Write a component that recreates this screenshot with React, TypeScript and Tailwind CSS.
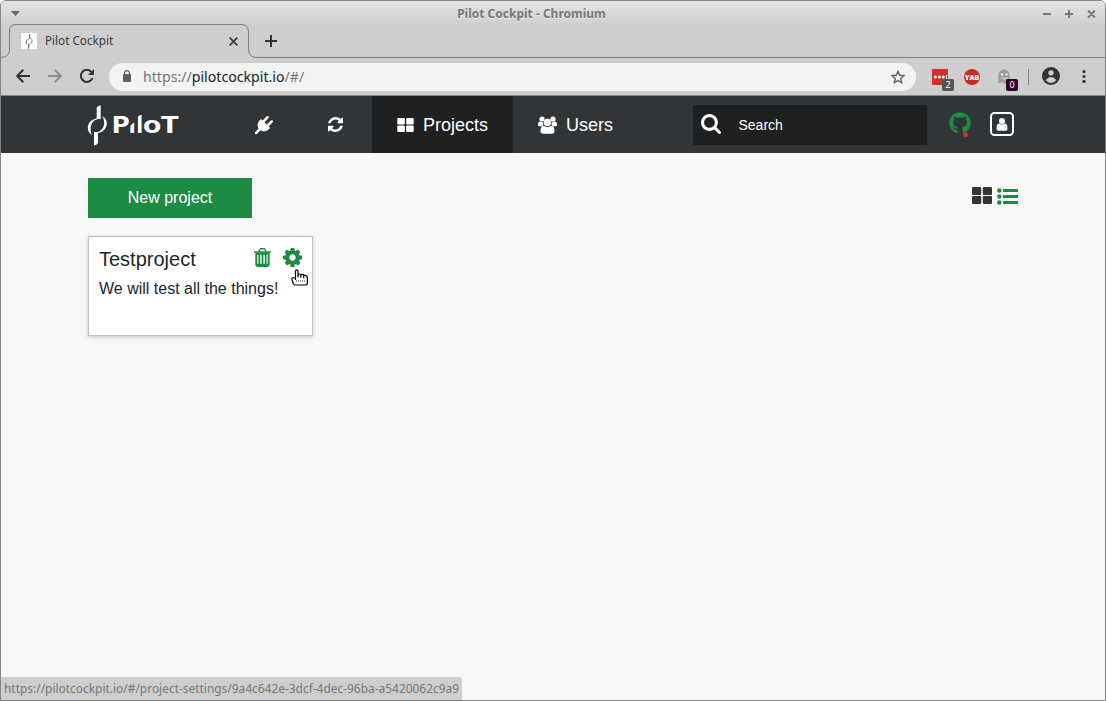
import { FaGithub } from "react-icons/fa";

const GEAR =
  "M1024 768q0-106-75-181t-181-75-181 75-75 181 75 181 181 75 181-75 75-181zm512-109v222q0 12-8 23t-20 13l-185 28q-19 54-39 91 35 50 107 138 10 12 10 25t-9 23q-27 37-99 108t-94 71q-12 0-26-9l-138-108q-44 23-91 38-16 136-29 186-7 28-36 28H657q-14 0-24.500-8.500T621 1506l-28-184q-49-16-90-37l-141 107q-10 9-25 9-14 0-25-11-126-114-165-168-7-10-7-23 0-12 8-23 15-21 51-66.500t54-70.500q-27-50-41-99L29 913q-13-2-21-12.500T0 877V655q0-12 8-23t19-13l186-28q14-46 39-92-40-57-107-138-10-12-10-24 0-10 9-23 26-36 98.500-107.500T337 135q13 0 26 10l138 107q44-23 91-38 16-136 29-186 7-28 36-28h222q14 0 24.500 8.500T915 30l28 184q49 16 90 37l142-107q9-9 24-9 13 0 25 10 129 119 165 170 7 8 7 22 0 12-8 23-15 21-51 66.500t-54 70.500q26 50 41 98l183 28q13 2 21 12.500t8 23.500z";
const REFRESH =
  "M1511 928q0 5-1 7-64 268-268 434.500T764 1536q-146 0-282.500-55T238 1324l-129 129q-19 19-45 19t-45-19-19-45V960q0-26 19-45t45-19h448q26 0 45 19t19 45-19 45l-137 137q71 66 161 102t187 36q134 0 250-65t186-179q11-17 53-117 8-23 30-23h192q13 0 22.500 9.500t9.500 22.500zm25-800v448q0 26-19 45t-45 19h-448q-26 0-45-19t-19-45 19-45l138-138Q969 256 768 256q-134 0-250 65T332 500q-11 17-53 117-8 23-30 23H50q-13 0-22.500-9.500T18 608v-7q65-268 270-434.500T768 0q146 0 284 55.500T1297 212l130-129q19-19 45-19t45 19 19 45z";
const SEARCH =
  "M1152 832q0-185-131.500-316.500T704 384 387.500 515.500 256 832t131.500 316.500T704 1280t316.500-131.500T1152 832zm512 832q0 52-38 90t-90 38q-54 0-90-38l-343-342q-179 124-399 124-143 0-273.500-55.500t-225-150-150-225T0 832t55.500-273.500 150-225 225-150T704 128t273.500 55.500 225 150 150 225T1408 832q0 220-124 399l343 343q37 37 37 90z";
const PLUG =
  "M1755 453q37 38 37 90.500t-37 90.500l-401 400 150 150-160 160q-163 163-389.500 186.500T543 1430l-362 362H0v-181l362-362q-124-185-100.500-411.500T448 448l160-160 150 150 400-401q38-37 91-37t90 37 37 90.500-37 90.500L939 619l234 234 401-400q38-37 91-37t90 37z";

function Tiles({ className }: { className: string }) {
  return (
    <svg className={className} viewBox="0 0 20 17" fill="currentColor">
      <rect x="0" y="0" width="9.200" height="8" rx="1.300" />
      <rect x="10.800" y="0" width="9.200" height="8" rx="1.300" />
      <rect x="0" y="9" width="9.200" height="8" rx="1.300" />
      <rect x="10.800" y="9" width="9.200" height="8" rx="1.300" />
    </svg>
  );
}

function Mark({ className }: { className: string }) {
  return (
    <svg className={className} viewBox="0 0 20 41" fill="currentColor">
      <path d="M13.700 .3V14H9.700V2.800Q10.200 1 13.700 .3z" />
      <path d="M7 40.500V27h4v11q-.5 1.800-4 2.500z" />
      <path d="M10.500 13.200C4.500 14 .8 18 .8 23c0 3.200 1.500 5.200 4 7C3.600 27 3.500 24.500 3.700 22c.5-4 2.800-6.800 6.800-7.800z" />
      <path d="M9.500 28.300C16 27.500 19.800 23.500 19.800 18.500c0-3.200-1.600-5.700-4.300-7.500 1.300 3 1.900 5.500 1.600 8-.5 4.200-3.300 7.300-7.600 8.300z" />
    </svg>
  );
}

function TitleBar() {
  return (
    <div className="flex h-[25px] shrink-0 items-center bg-gradient-to-b from-[#e4e4e4] to-[#cecece] text-[#777]">
      <svg className="ml-[10px] h-[5px] w-[9px]" viewBox="0 0 9 5" fill="#666"><path d="M0 0h9L4.500 5z" /></svg>
      <div className="flex-1 text-center font-['Noto_Sans'] text-[12px] font-bold [text-shadow:0_1px_0_#eee]">
        Pilot Cockpit - Chromium
      </div>
      <svg className="mr-2 h-[10px] w-[54px]" viewBox="0 0 54 10" stroke="#777" strokeWidth="2" fill="none">
        <path d="M0 5h8M22 5h8M26 1v8M45 1.500l7 7M52 1.500l-7 7" />
      </svg>
    </div>
  );
}

function TabStrip() {
  return (
    <div className="relative flex h-8 shrink-0 bg-[#cecece] font-['Noto_Sans'] text-[11.700px] text-[#3c3c3c]">
      <svg className="pointer-events-none absolute -top-[2px] left-0 h-[34px] w-full" fill="none" stroke="#7e7e7e">
        <path d="M0 33.500Q8.500 33.500 8.500 25V7Q8.500 .5 15 .5H240Q247.500 .5 247.500 8V25Q247.500 33.500 256 33.500H1104" />
      </svg>
      <div className="flex h-[30px] w-[247px] items-center pl-5">
        <span className="flex size-4 items-center justify-center bg-white text-[#777]"><Mark className="h-[15px] w-[8px]" /></span>
        <span className="ml-2 flex-1">Pilot Cockpit</span>
        <svg className="mr-[10.500px] size-[9px]" viewBox="0 0 9 9" stroke="#3e3e3e" strokeWidth="1.800"><path d="M.7 .7l7.600 7.600M8.300 .7L.7 8.300" /></svg>
      </div>
      <svg className="ml-[17px] mt-[9px] size-3" viewBox="0 0 12 12" stroke="#333" strokeWidth="2"><path d="M6 0v12M0 6h12" /></svg>
    </div>
  );
}

function Toolbar() {
  return (
    <div className="flex h-[38px] shrink-0 items-center border-b border-[#858585] bg-[#cecece] font-['Noto_Sans']">
      <svg className="mb-[2px] ml-[15px] h-[14px] w-[14px]" viewBox="0 0 14 14" fill="none" stroke="#333" strokeWidth="2"><path d="M14 7H1.500M7.300 .8L1.200 7l6.100 6.200" /></svg>
      <svg className="mb-[2px] ml-[18px] h-[14px] w-[14px]" viewBox="0 0 14 14" fill="none" stroke="#8c8c8c" strokeWidth="2"><path d="M0 7h12.500M6.700 .8L12.800 7l-6.100 6.200" /></svg>
      <svg className="mb-[2px] ml-[18px] size-[14px]" viewBox="0 0 14 14" fill="none" stroke="#333" strokeWidth="2"><path d="M12.500 9A6 6 0 1 1 11.300 2.800L13 4.500" /><path d="M14 0v6H8z" fill="#333" stroke="none" /></svg>
      <div className="ml-[15px] flex h-7 w-[807px] items-center rounded-full bg-[#f1f3f4] text-[14.150px] text-[#72767a]">
        <svg className="mb-px ml-[14px] h-[12px] w-[8px]" viewBox="0 0 9 12" preserveAspectRatio="none" fill="#5b5e63"><path fillRule="evenodd" d="M1 4V3.500a3.500 3.500 0 0 1 7 0V4q1 0 1 1v6q0 1-1 1H1q-1 0-1-1V5q0-1 1-1zm1.300 0h4.400V3.500a2.200 2.200 0 0 0-4.400 0z" /></svg>
        <span className="ml-3 flex-1">https://<span className="text-[#202124]">pilotcockpit.io</span>/#/</span>
        <svg className="mr-[11px] size-[14px]" viewBox="0 0 14 14" fill="none" stroke="#5f6368" strokeWidth="1.400"><path d="M7 1.300l1.700 4 4.300.4-3.300 2.800 1 4.200L7 10.500l-3.700 2.200 1-4.200L1 5.700l4.300-.4z" /></svg>
      </div>
      <div className="relative ml-4 flex size-4 items-center rounded-[1px] bg-[#d32d27]">
        <svg className="h-1 w-4" viewBox="0 0 16 4" fill="white"><circle cx="3.300" cy="2" r="1.500" /><circle cx="7.300" cy="2" r="1.500" /><circle cx="11.300" cy="2" r="1.500" /><path d="M14 0h1v4h-1z" /></svg>
        <span className="absolute left-[10px] top-[10px] flex h-3 w-3 items-center justify-center rounded-[2px] bg-[#555] text-[9px] text-white">2</span>
      </div>
      <div className="ml-4 flex size-4 items-center justify-center rounded-full bg-[#c92b24] pt-[2px] font-['Open_Sans'] text-[7px] font-extrabold leading-none text-white">YAB</div>
      <div className="relative ml-4 size-4">
        <svg className="size-4" viewBox="0 0 16 16"><path d="M2.500 13V6a5.500 5.500 0 0 1 11 0v8l-3-1-2 2-2-2-3 1-2 0z" fill="#9b9b9b" /><circle cx="6" cy="5.500" r="1.300" fill="#e6e6e6" /><circle cx="10.500" cy="5.500" r="1.300" fill="#e6e6e6" /><path d="M5 8.500q3.200 3 6.500 0" stroke="#e6e6e6" fill="none" /></svg>
        <span className="absolute left-[10px] top-[10px] flex h-3 w-3 items-center justify-center rounded-[2px] bg-[#33002f] text-[9px] text-white">0</span>
      </div>
      <span className="ml-4 h-4 w-px bg-[#858585]" />
      <svg className="mb-[2px] ml-[13px] size-[18px]" viewBox="0 0 17 17"><circle cx="8.500" cy="8.500" r="8.500" fill="#333" /><circle cx="8.500" cy="5.500" r="2.500" fill="#cecece" /><path d="M3.500 12.500q2-3 5-3t5 3q-2 2.500-5 2.500t-5-2.500z" fill="#cecece" /></svg>
      <svg className="ml-[21.500px] h-[13px] w-[4px]" viewBox="0 0 4 13" fill="#333"><circle cx="2" cy="1.600" r="1.600" /><circle cx="2" cy="6.500" r="1.600" /><circle cx="2" cy="11.400" r="1.600" /></svg>
    </div>
  );
}

function Logo() {
  return (
    <div className="ml-[86px] flex h-[41px] w-[92px] shrink-0 items-center">
      <Mark className="mt-[2px] h-[41px] w-5" />
      <svg className="ml-[4px] h-10 w-[68px] shrink-0 overflow-visible" viewBox="0 0 68 40" fill="white" fontFamily="Open Sans" fontWeight="700" fontSize="24">
        <clipPath id="slant"><path d="M19 30V21l5-4.500v12.500zM26.500 30V12l5-4v22z" /></clipPath>
        <text x=".2" y="28" textLength="18.800" lengthAdjust="spacingAndGlyphs">P</text>
        <g clipPath="url(#slant)"><text x="17.500" y="28">l</text><text x="25" y="28">l</text></g>
        <text x="31.700" y="28" textLength="18.800" lengthAdjust="spacingAndGlyphs">o</text>
        <text x="49.500" y="28" textLength="18.500" lengthAdjust="spacingAndGlyphs">T</text>
      </svg>
    </div>
  );
}

function NavBar() {
  return (
    <nav className="flex h-[57px] shrink-0 items-center bg-[#313538] text-[18px] text-white">
      <Logo />
      <svg className="ml-[76px] size-[18px]" viewBox="0 0 1792 1792" fill="currentColor"><path d={PLUG} /></svg>
      <svg className="ml-[54.500px] size-[15px]" viewBox="0 0 1536 1536" fill="currentColor"><path d={REFRESH} /></svg>
      <div className="ml-[29.500px] flex h-full w-[141px] items-center bg-[#1e2022] pl-[24.500px]">
        <Tiles className="h-[14px] w-[17px]" />
        <span className="ml-[9.500px] pt-0.5">Projects</span>
      </div>
      <svg className="ml-[25px] h-[18px] w-[19px]" viewBox="0 0 19 18" fill="currentColor">
        <circle cx="4" cy="3" r="2.600" /><circle cx="15" cy="3" r="2.600" />
        <path d="M0 9.500Q0 5.500 2 5.500l3 .8.500 2.500L4 10.200H1.500Q0 10.200 0 9.500zM19 9.500Q19 5.500 17 5.500l-3 .8-.5 2.500 1.500 1.400h2.500q1.500 0 1.500-.7z" />
        <circle cx="9.500" cy="6.400" r="3.700" />
        <path d="M2.500 15q0-5.300 3.500-5.300 3.500 2.500 7 0 3.500 0 3.500 5.300 0 2.700-2.600 2.700H5.100Q2.500 17.700 2.500 15z" />
      </svg>
      <span className="ml-[9px] pt-0.5">Users</span>
      <div className="ml-auto flex h-10 w-[234px] items-center bg-[#1e2022] pl-2 text-[14px]">
        <svg className="mb-px size-5" viewBox="0 128 1664 1664" fill="currentColor"><path d={SEARCH} /></svg>
        <span className="ml-[17.500px] pt-px">Search</span>
      </div>
      <div className="relative mb-[4px] ml-[22px] size-[22px]">
        <FaGithub className="size-[22px] text-[#1d8b42]" />
        <span className="absolute left-[14px] top-[20px] size-[5px] rounded-full bg-[#f02424]" />
      </div>
      <svg className="mb-px ml-[19px] mr-[91px] size-6" viewBox="0 0 24 24" fill="none">
        <rect x="1" y="1" width="22" height="22" rx="3.500" stroke="white" strokeWidth="2" />
        <circle cx="12" cy="9" r="3" fill="white" />
        <path d="M6.500 16.500q0-5 2.800-5 2.700 2 5.400 0 2.800 0 2.800 5 0 2.200-2 2.200h-7q-2 0-2-2.200z" fill="white" />
      </svg>
    </nav>
  );
}

function ProjectCard() {
  return (
    <article className="relative mt-[18px] h-[100px] w-[225px] border border-[#c2c2c2] bg-white px-[10px] pt-[10px] shadow-[0_1px_4px_#0003]">
      <header className="flex h-6 items-center text-[20px] text-[#212529]">
        <h2 className="flex-1">Testproject</h2>
        <svg className="mb-[3px] mr-3 h-[19px] w-[17px]" viewBox="0 0 17 19" fill="none" stroke="#1d8b42">
          <path d="M0 4h17" strokeWidth="1.700" /><path d="M5 3.500l1-2.300q.2-.5 1-.5h3q.8 0 1 .5l1 2.300" strokeWidth="1.400" />
          <path d="M2.300 4.500V16q0 2 1.700 2h9q1.700 0 1.700-2V4.500" strokeWidth="2" />
          <path d="M5.300 17V6M8.500 17V6M11.700 17V6" strokeWidth="1.800" /><path d="M3 17h11" strokeWidth="2.400" /><path d="M3 5.500h11" strokeWidth="2.400" />
        </svg>
        <svg className="mb-[3px] size-[19px]" viewBox="0 0 1536 1536" fill="#1d8b42"><path d={GEAR} /></svg>
      </header>
      <p className="mt-[6px] whitespace-nowrap text-[16px] leading-6 text-[#212529]">We will test all the things!</p>
      <svg className="absolute left-[202px] top-[32px] h-[18px] w-[18px]" viewBox="0 0 18 18" fill="white" stroke="black" strokeWidth="1.200" strokeLinejoin="round">
        <path d="M4.500 9.500V2.200Q4.500.8 5.700.8T7 2.200V6q0-1 1.300-1t1.500 1.200q.2-1 1.500-.8t1.400 1.400q.2-.8 1.500-.5 2.200.5 2.200 2.400v5q0 2.300-2.200 2.300H4Q2 15.500 2 13.800L.9 10.500Q.7 8.800 2 8.500q1 0 2.500 1.500v1" />
        <path d="M7 6v2.500M9.800 6.200v2.500M12.700 6.800v2.400" /><path d="M5 12h9" strokeDasharray="1 1" strokeWidth=".8" />
      </svg>
    </article>
  );
}

export default function App() {
  return (
    <div className="flex h-[701px] w-[1106px] flex-col overflow-hidden rounded-t-[6px] border border-[#858585] bg-[#f7f7f7] font-['Liberation_Sans',sans-serif]">
      <TitleBar />
      <TabStrip />
      <Toolbar />
      <NavBar />
      <main className="flex-1 pl-[87px] pr-[87px] pt-[25px]">
        <div className="flex items-center">
          <button className="h-10 w-[164px] bg-[#1d8b42] text-[16px] text-white">New project</button>
          <Tiles className="mb-[5px] ml-auto h-[17px] w-5 text-[#313538]" />
          <svg className="mb-[4px] ml-[5px] h-[17px] w-[21px]" viewBox="0 0 21 17" fill="#1d8b42"><circle cx="2.300" cy="2.500" r="2.200" /><circle cx="2.300" cy="8.500" r="2.200" /><circle cx="2.300" cy="14.500" r="2.200" /><path d="M6 1h15v3H6zM6 7h15v3H6zM6 13h15v3H6z" /></svg>
        </div>
        <ProjectCard />
      </main>
      <div className="flex h-[23px] w-[461px] items-center rounded-tr-[4px] bg-[#cecece] pl-[3px] font-['Noto_Sans'] text-[11.930px] text-[#777]">https://pilotcockpit.io/#/project-settings/9a4c642e-3dcf-4dec-96ba-a5420062c9a9</div>
    </div>
  );
}
